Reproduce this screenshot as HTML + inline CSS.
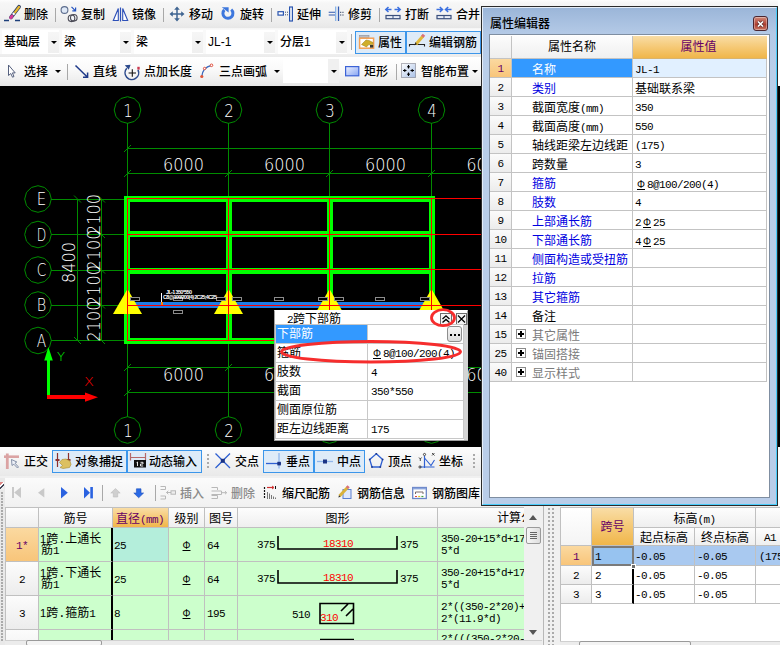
<!DOCTYPE html>
<html lang="zh-CN">
<head>
<meta charset="utf-8">
<title>属性编辑器</title>
<style>
*{box-sizing:border-box;margin:0;padding:0}
html,body{width:780px;height:645px;overflow:hidden;background:#f0f0f0}
body{position:relative;font-family:"Liberation Sans","Noto Sans CJK SC","WenQuanYi Zen Hei",sans-serif;font-size:12px;color:#000;line-height:1}
.abs,.t,.sep,.btn,.combo,.c,.ic{position:absolute}
.t{white-space:nowrap;height:14px;line-height:14px;font-size:12px;color:#000;font-weight:500}
.sep{width:1px;background:#a8a8a8}
.tb1{position:absolute;left:0;top:0;width:780px;height:28px;background:linear-gradient(#fdfdfd 0,#f6f6f6 3px,#f3f3f3 50%,#eaeaea 90%,#e6e6e6)}
.tb2{position:absolute;left:0;top:28px;width:780px;height:29px;background:linear-gradient(#f4f4f4 0,#f9f9f9 1.5px,#f9f9f9 25.5px,#eeeeee 26.5px,#ebebeb 29px)}
.tb3{position:absolute;left:0;top:57px;width:780px;height:29px;background:linear-gradient(#ffffff,#fafafa 40%,#f0f0f0 75%,#e6e6e6)}
.combo{top:30px;height:24px;background:#fff}
.combo .t{left:2px;top:5px;font-size:12px}
.combo .ar{position:absolute;right:0;top:2px;width:11px;height:21px;background:linear-gradient(#f6f6f6,#efefef)}
.combo .ar:after,.dar:after{content:"";position:absolute;left:3px;top:9px;border:3px solid transparent;border-top:3px solid #000;border-bottom:0}
.dar{position:absolute;width:8px;height:8px}
.dar:after{left:0;top:0}
.btn{border:1px solid #3c96ea;background:#deebf8}
svg{position:absolute;overflow:visible}

.cn{font-family:"Liberation Mono","Noto Sans CJK SC","WenQuanYi Zen Hei",monospace}
.m{font-family:"Liberation Mono",monospace;font-size:11px;letter-spacing:-0.6px}
.phi{font-family:"Liberation Sans",sans-serif;font-size:10px;letter-spacing:0;display:inline-block;width:12px;text-align:center;text-decoration:underline;text-decoration-thickness:1px;text-underline-offset:0.5px}
#dlg{position:absolute;left:481px;top:6px;width:297px;height:500px;border:1px solid #2b2b2b;background:linear-gradient(#9ab5d8,#b3c9e6 26px,#b9cee9 60px,#b9cde9)}
#dlg .in{position:absolute;left:0;top:0;right:0;bottom:0;border:1px solid #e6eef8;border-bottom-color:#49cdfb;border-right-color:#49cdfb}
#dlg .cl{position:absolute;left:7px;top:27px;width:281px;height:464px;padding-top:1px;background:#fff;border:1px solid #7f8ea1}
.pr{position:absolute;left:0;width:277px;height:19px;border-bottom:1px solid #c3c3c3}
.pr .n{position:absolute;left:0;top:0;width:22px;height:18px;background:linear-gradient(#fbfbfb,#ececec);border-right:1px solid #c3c3c3;text-align:center;line-height:21px;font-size:11px;letter-spacing:-0.6px;overflow:hidden}
.pr .k{position:absolute;left:22px;top:0;width:121px;height:18px;border-right:1px solid #c3c3c3;padding-left:20px;line-height:25px;overflow:hidden;white-space:nowrap}
.pr .v{position:absolute;left:143px;top:0;width:134px;height:18px;padding-left:2px;line-height:25px;overflow:hidden;white-space:nowrap;border-right:1px solid #c3c3c3}
.pr .v .m,.qr .v .m{position:relative;top:-1px}
.bl{color:#0000e0}
.gy{color:#7a7a7a}
.plus{position:absolute;left:4px;top:4px;width:10px;height:10px;border:1px solid #8a8a8a;background:#fff}
.plus:before{content:"";position:absolute;left:1px;top:3px;width:6px;height:2px;background:#000}
.plus:after{content:"";position:absolute;left:3px;top:1px;width:2px;height:6px;background:#000}
#pop{position:absolute;left:274px;top:310px;width:194px;height:131px;background:#fff;border:1px solid #a0a0a0;border-top-color:#fff}
.qr{position:absolute;left:0px;width:189px;height:19px;border-bottom:1px solid #c8c8c8;border-left:1px solid #c8c8c8}
.qr .k{position:absolute;left:0;top:0;width:92px;height:18px;border-right:1px solid #c8c8c8;padding-left:1px;line-height:21px;overflow:hidden;white-space:nowrap;font-size:12px}
.qr .v{position:absolute;left:92px;top:0;width:96px;height:18px;padding-left:3px;line-height:22px;white-space:nowrap;border-right:1px solid #c8c8c8}

.sn{position:absolute;left:0;top:447px;width:780px;height:29px;background:linear-gradient(#fdfdfd,#f3f3f3 50%,#e9e9e9)}
.rb{position:absolute;left:0;top:476px;width:780px;height:169px;background:#f0f0f0}
.gt{position:absolute;background:#fff;overflow:hidden}
.gt .c{border-right:1px solid #c0c0c0;border-bottom:1px solid #c0c0c0;white-space:nowrap;overflow:hidden;font-size:12px}
.hd{background:linear-gradient(#fdfdfd,#efefef);text-align:center;line-height:24px}
.g{background:#ccffcc}
.num{background:linear-gradient(#fcfcfc,#ececec);text-align:center}
.grip{position:absolute;width:3px;background-image:radial-gradient(circle at 1px 1px,#aaa 0.9px,transparent 1.1px);background-size:3px 4px}
</style>
</head>
<body>
<!-- ===== toolbar row 1 ===== -->
<div class="tb1">
 <div class="t" style="left:24px;top:8px">删除</div>
 <div class="sep" style="left:55px;top:8px;height:14px"></div>
 <div class="t" style="left:81px;top:8px">复制</div>
 <div class="t" style="left:132px;top:8px">镜像</div>
 <div class="sep" style="left:163px;top:8px;height:14px"></div>
 <div class="t" style="left:189px;top:8px">移动</div>
 <div class="t" style="left:240px;top:8px">旋转</div>
 <div class="sep" style="left:271px;top:8px;height:14px"></div>
 <div class="t" style="left:297px;top:8px">延伸</div>
 <div class="t" style="left:348px;top:8px">修剪</div>
 <div class="sep" style="left:379px;top:8px;height:14px"></div>
 <div class="t" style="left:405px;top:8px">打断</div>
 <div class="t" style="left:456px;top:8px">合并</div>
</div>
<!-- ===== toolbar row 2 ===== -->
<div class="tb2"></div>
<div class="combo" style="left:2px;width:57px"><div class="t">基础层</div><div class="ar"></div></div>
<div class="combo" style="left:62px;width:69px"><div class="t">梁</div><div class="ar"></div></div>
<div class="combo" style="left:134px;width:69px"><div class="t">梁</div><div class="ar"></div></div>
<div class="combo" style="left:206px;width:69px"><div class="t">JL-1</div><div class="ar"></div></div>
<div class="combo" style="left:278px;width:69px"><div class="t">分层1</div><div class="ar"></div></div>
<div class="sep" style="left:351px;top:34px;height:16px"></div>
<div class="btn" style="left:355px;top:31px;width:51px;height:23px"></div>
<div class="btn" style="left:406px;top:31px;width:75px;height:23px"></div>
<div class="t" style="left:378px;top:36px">属性</div>
<div class="t" style="left:429px;top:36px">编辑钢筋</div>
<!-- ===== toolbar row 3 ===== -->
<div class="tb3"></div>
<div class="t" style="left:24px;top:65px">选择</div>
<div class="dar" style="left:55px;top:70px"></div>
<div class="sep" style="left:67px;top:64px;height:16px"></div>
<div class="t" style="left:93px;top:65px">直线</div>
<div class="t" style="left:144px;top:65px">点加长度</div>
<div class="t" style="left:219px;top:65px">三点画弧</div>
<div class="dar" style="left:274px;top:70px"></div>
<div class="abs" style="left:283px;top:59px;width:45px;height:24px;background:#fff"></div>
<div class="abs" style="left:328px;top:59px;width:11px;height:24px;background:#f0f0f0"></div>
<div class="dar" style="left:331px;top:70px"></div>
<div class="t" style="left:364px;top:65px">矩形</div>
<div class="sep" style="left:396px;top:64px;height:16px"></div>
<div class="t" style="left:421px;top:65px">智能布置</div>
<div class="dar" style="left:472px;top:70px"></div>

<!-- ===== CANVAS ===== -->
<div id="canvas" class="abs" style="left:0;top:86px;width:482px;height:361px;background:#000"></div>
<svg id="cad" style="left:0;top:86px" width="482" height="361" viewBox="0 86 482 361" shape-rendering="crispEdges" font-family="'DejaVu Sans','Liberation Sans',sans-serif">
<g fill="none" stroke="#008c00" stroke-width="1">
<polygon points="127.5,123.3 120.9,121.5 116.0,116.7 114.2,110.0 116.0,103.4 120.9,98.5 127.5,96.7 134.1,98.5 139.0,103.3 140.8,110.0 139.0,116.7 134.2,121.5" shape-rendering="auto"/>
<polygon points="127.5,443.3 120.9,441.5 116.0,436.6 114.2,430.0 116.0,423.4 120.9,418.5 127.5,416.7 134.1,418.5 139.0,423.3 140.8,430.0 139.0,436.6 134.2,441.5" shape-rendering="auto"/>
<path d="M127.5 123V196M127.5 344V417"/>
<polygon points="228.5,123.3 221.8,121.5 217.0,116.7 215.2,110.0 217.0,103.4 221.8,98.5 228.5,96.7 235.1,98.5 240.0,103.3 241.8,110.0 240.0,116.7 235.2,121.5" shape-rendering="auto"/>
<polygon points="228.5,443.3 221.8,441.5 217.0,436.6 215.2,430.0 217.0,423.4 221.8,418.5 228.5,416.7 235.1,418.5 240.0,423.3 241.8,430.0 240.0,436.6 235.2,441.5" shape-rendering="auto"/>
<path d="M228.5 123V196M228.5 344V417"/>
<polygon points="329.5,123.3 322.9,121.5 318.0,116.7 316.2,110.0 318.0,103.4 322.9,98.5 329.5,96.7 336.1,98.5 341.0,103.3 342.8,110.0 341.0,116.7 336.2,121.5" shape-rendering="auto"/>
<polygon points="329.5,443.3 322.9,441.5 318.0,436.6 316.2,430.0 318.0,423.4 322.9,418.5 329.5,416.7 336.1,418.5 341.0,423.3 342.8,430.0 341.0,436.6 336.2,441.5" shape-rendering="auto"/>
<path d="M329.5 123V196M329.5 344V417"/>
<polygon points="431.5,123.3 424.9,121.5 420.0,116.7 418.2,110.0 420.0,103.4 424.9,98.5 431.5,96.7 438.1,98.5 443.0,103.3 444.8,110.0 443.0,116.7 438.2,121.5" shape-rendering="auto"/>
<polygon points="431.5,443.3 424.9,441.5 420.0,436.6 418.2,430.0 420.0,423.4 424.9,418.5 431.5,416.7 438.1,418.5 443.0,423.3 444.8,430.0 443.0,436.6 438.2,441.5" shape-rendering="auto"/>
<path d="M431.5 123V196M431.5 344V417"/>
<polygon points="38.0,212.3 31.4,210.5 26.5,205.7 24.7,199.0 26.5,192.3 31.4,187.5 38.0,185.7 44.6,187.5 49.5,192.3 51.3,199.0 49.5,205.7 44.7,210.5" shape-rendering="auto"/>
<path d="M51 199.0H124"/>
<polygon points="38.0,247.8 31.4,246.0 26.5,241.2 24.7,234.5 26.5,227.8 31.4,223.0 38.0,221.2 44.6,223.0 49.5,227.8 51.3,234.5 49.5,241.2 44.7,246.0" shape-rendering="auto"/>
<path d="M51 234.5H124"/>
<polygon points="38.0,283.3 31.4,281.5 26.5,276.6 24.7,270.0 26.5,263.4 31.4,258.5 38.0,256.7 44.6,258.5 49.5,263.3 51.3,270.0 49.5,276.6 44.7,281.5" shape-rendering="auto"/>
<path d="M51 270.0H124"/>
<polygon points="38.0,318.3 31.4,316.5 26.5,311.6 24.7,305.0 26.5,298.4 31.4,293.5 38.0,291.7 44.6,293.5 49.5,298.3 51.3,305.0 49.5,311.6 44.7,316.5" shape-rendering="auto"/>
<path d="M51 305.0H124"/>
<polygon points="38.0,353.8 31.4,352.0 26.5,347.1 24.7,340.5 26.5,333.9 31.4,329.0 38.0,327.2 44.6,329.0 49.5,333.8 51.3,340.5 49.5,347.1 44.7,352.0" shape-rendering="auto"/>
<path d="M51 340.5H124"/>
<path d="M127.5 148.5H482M127.5 173.5H482"/>
<path d="M127.5 367.5H482M127.5 392.5H482"/>
<path d="M77.5 199V341M101.5 199V341"/>
<path d="M124.0 152.0l7 -7M124.0 177.0l7 -7M124.0 371.0l7 -7M124.0 396.0l7 -7M225.0 177.0l7 -7M225.0 371.0l7 -7M326.0 177.0l7 -7M326.0 371.0l7 -7M428.0 177.0l7 -7M428.0 371.0l7 -7M74.0 195.5l7 7M98.0 195.5l7 7M98.0 231.0l7 7M98.0 266.5l7 7M98.0 301.5l7 7M74.0 337.0l7 7M98.0 337.0l7 7" shape-rendering="auto"/>
</g>
<g stroke="#00ff00" stroke-width="6" fill="none">
<path d="M127.3 196V344"/>
<path d="M229.0 196V344"/>
<path d="M330.0 196V344"/>
<path d="M431.5 196V344"/>
<path d="M124 199.0H434.5"/>
<path d="M124 234.0H434.5"/>
<path d="M124 271.0H434.5"/>
<path d="M124 340.8H434.5"/>
</g>
<path d="M131 305.2H432" stroke="#1f7ce6" stroke-width="6.4" fill="none"/>
<g stroke="#ff0000" stroke-width="1" fill="none">
<path d="M127.5 198V341"/>
<path d="M228.5 198V341"/>
<path d="M329.5 198V341"/>
<path d="M431.5 198V341"/>
<path d="M128 198.5H482"/>
<path d="M128 234.5H482"/>
<path d="M128 269.5H482"/>
<path d="M128 305.5H482"/>
<path d="M128 340.5H433"/>
</g>
<polygon points="127.5,289 113.0,314 142.0,314" fill="#ffff00" shape-rendering="auto"/>
<polygon points="228.5,289 214.0,314 243.0,314" fill="#ffff00" shape-rendering="auto"/>
<polygon points="329.5,289 315.0,314 344.0,314" fill="#ffff00" shape-rendering="auto"/>
<polygon points="431.5,289 417.0,314 446.0,314" fill="#ffff00" shape-rendering="auto"/>
<g stroke="#ff0000" stroke-width="1" fill="none">
<path d="M127.5 289V315"/>
<path d="M228.5 289V315"/>
<path d="M329.5 289V315"/>
<path d="M431.5 289V315"/>
<path d="M128 305.5H482"/>
</g>
<g stroke="#8c8c8c" stroke-width="1" fill="#000">
<rect x="130.5" y="297.5" width="9" height="3"/>
<rect x="173.5" y="297.5" width="9" height="3"/>
<rect x="173.5" y="310.5" width="9" height="3"/>
<rect x="216.5" y="297.5" width="9" height="3"/>
<rect x="232.5" y="297.5" width="9" height="3"/>
<rect x="274.5" y="297.5" width="9" height="3"/>
<rect x="318.5" y="297.5" width="9" height="3"/>
<rect x="334.5" y="297.5" width="9" height="3"/>
<rect x="375.5" y="297.5" width="9" height="3"/>
<rect x="420.5" y="297.5" width="9" height="3"/>
</g>
<path d="M161.5 293V302" stroke="#fff"/><rect x="161" y="302" width="2" height="3" fill="#ff8000"/>
<text x="166" y="294" font-size="5.5" font-weight="bold" fill="#fff" shape-rendering="auto" textLength="26" font-family="'Liberation Sans',sans-serif">JL-1 350*550</text>
<text x="163" y="299" font-size="5.5" font-weight="bold" fill="#fff" textLength="54" font-family="'Liberation Sans',sans-serif">C8@100/200(4) 2C25;4C25</text>
<g fill="#fff" font-size="18.5" font-weight="200" text-anchor="middle" shape-rendering="auto">
<text x="183.5" y="171.3" textLength="41" lengthAdjust="spacingAndGlyphs">6000</text>
<text x="183.5" y="381.3" textLength="41" lengthAdjust="spacingAndGlyphs">6000</text>
<text x="284.5" y="171.3" textLength="41" lengthAdjust="spacingAndGlyphs">6000</text>
<text x="284.5" y="381.3" textLength="41" lengthAdjust="spacingAndGlyphs">6000</text>
<text x="385.5" y="171.3" textLength="41" lengthAdjust="spacingAndGlyphs">6000</text>
<text x="385.5" y="381.3" textLength="41" lengthAdjust="spacingAndGlyphs">6000</text>
<text x="466.5" y="171.3" text-anchor="start" textLength="20" lengthAdjust="spacingAndGlyphs">60</text>
<text x="466.5" y="381.3" text-anchor="start" textLength="20" lengthAdjust="spacingAndGlyphs">60</text>
<text x="128.0" y="116.5" textLength="9.5" lengthAdjust="spacingAndGlyphs">1</text>
<text x="128.0" y="436.5" textLength="9.5" lengthAdjust="spacingAndGlyphs">1</text>
<text x="229.0" y="116.5" textLength="9.5" lengthAdjust="spacingAndGlyphs">2</text>
<text x="229.0" y="436.5" textLength="9.5" lengthAdjust="spacingAndGlyphs">2</text>
<text x="330.0" y="116.5" textLength="9.5" lengthAdjust="spacingAndGlyphs">3</text>
<text x="330.0" y="436.5" textLength="9.5" lengthAdjust="spacingAndGlyphs">3</text>
<text x="432.0" y="116.5" textLength="9.5" lengthAdjust="spacingAndGlyphs">4</text>
<text x="432.0" y="436.5" textLength="9.5" lengthAdjust="spacingAndGlyphs">4</text>
<text x="41.5" y="205.3" textLength="9.5" lengthAdjust="spacingAndGlyphs">E</text>
<text x="41.5" y="240.8" textLength="9.5" lengthAdjust="spacingAndGlyphs">D</text>
<text x="41.5" y="276.3" textLength="9.5" lengthAdjust="spacingAndGlyphs">C</text>
<text x="41.5" y="311.3" textLength="9.5" lengthAdjust="spacingAndGlyphs">B</text>
<text x="41.5" y="346.8" textLength="9.5" lengthAdjust="spacingAndGlyphs">A</text>
<text transform="translate(74.6 262.5) rotate(-90)" textLength="41" lengthAdjust="spacingAndGlyphs">8400</text>
<text transform="translate(100.2 214.5) rotate(-90)" textLength="41" lengthAdjust="spacingAndGlyphs">2100</text>
<text transform="translate(100.2 250.0) rotate(-90)" textLength="41" lengthAdjust="spacingAndGlyphs">2100</text>
<text transform="translate(100.2 285.5) rotate(-90)" textLength="41" lengthAdjust="spacingAndGlyphs">2100</text>
<text transform="translate(100.2 321.0) rotate(-90)" textLength="41" lengthAdjust="spacingAndGlyphs">2100</text>
</g>
<path d="M48.4 398V358" stroke="#00ff00" stroke-width="3.4" fill="none"/><polygon points="44.2,360.5 48.4,347 52.8,360.5" fill="#00ff00" shape-rendering="auto"/>
<path d="M46.7 397H86" stroke="#ff0000" stroke-width="4" fill="none"/><polygon points="85,392.6 98,397.2 85,401.8" fill="#ff0000" shape-rendering="auto"/>
<text x="57" y="360.5" font-size="13" fill="#00ff00" font-weight="200" shape-rendering="auto">Y</text>
<text x="84" y="386" font-size="13" fill="#ff0000" font-weight="200" shape-rendering="auto" textLength="10" lengthAdjust="spacingAndGlyphs">X</text>
</svg>
<!-- ===== ENDCANVAS ===== -->
<!-- ===== POPUP ===== -->
<div id="pop" class="cn">
<div class="t" style="left:12px;top:2px;font-weight:400"><span class="m">2</span>跨下部筋</div>
<div class="abs" style="left:165px;top:2px;width:12px;height:12px;border:1px solid #6e6e6e;background:#f4f4f4"><svg style="left:1px;top:1px" width="8" height="8" viewBox="0 0 8 8"><path d="M0.5 4L4 0.8L7.5 4M0.5 7.6L4 4.4L7.5 7.6" stroke="#000" stroke-width="1.3" fill="none"/></svg></div>
<div class="abs" style="left:181px;top:2px;width:11px;height:12px;border:1px solid #6e6e6e;background:#f4f4f4"><svg style="left:0;top:1px" width="9" height="8" viewBox="0 0 9 8"><path d="M1 0.5L8 7.5M8 0.5L1 7.5" stroke="#000" stroke-width="1.2" fill="none"/></svg></div>
<div class="qr" style="top:14px"><div class="k" style="background:#3399ff;color:#fff">下部筋</div><div class="v"><span class="m"></span><div class="abs" style="left:79px;top:1px;width:15px;height:16px;border:1px solid #8e8e8e;border-radius:3px;background:linear-gradient(#f6f6f6,#dcdcdc)"><div class="abs" style="left:2px;top:7px;width:2px;height:2px;background:#000;box-shadow:4px 0 #000,8px 0 #000"></div></div></div></div>
<div class="qr" style="top:33px"><div class="k">箍筋</div><div class="v"><span class="m"><span class="phi">Φ</span>8@100/200(4)</span></div></div>
<div class="qr" style="top:52px"><div class="k">肢数</div><div class="v"><span class="m">4</span></div></div>
<div class="qr" style="top:71px"><div class="k">截面</div><div class="v"><span class="m">350*550</span></div></div>
<div class="qr" style="top:90px"><div class="k">侧面原位筋</div><div class="v"><span class="m"></span></div></div>
<div class="qr" style="top:109px"><div class="k">距左边线距离</div><div class="v"><span class="m">175</span></div></div>
<div class="abs" style="left:189px;top:14px;width:4px;height:115px;background:#d4d4d4"></div><div class="abs" style="left:0;top:13px;width:189px;height:1px;background:#c8c8c8"></div>
</div>
<svg style="left:0;top:0" width="780" height="645"><ellipse cx="371" cy="351.8" rx="89.5" ry="10.3" fill="none" stroke="#f62d2d" stroke-width="3"/><ellipse cx="443" cy="317.7" rx="11.5" ry="8" fill="none" stroke="#f62d2d" stroke-width="2.8"/></svg>
<!-- ===== BOTTOM ===== -->
<div class="sn"></div>
<div class="t" style="left:24px;top:455px">正交</div>
<div class="btn" style="left:52px;top:450px;width:75px;height:23px"></div>
<div class="btn" style="left:127px;top:450px;width:75px;height:23px"></div>
<div class="t" style="left:75px;top:455px">对象捕捉</div>
<div class="t" style="left:149px;top:455px">动态输入</div>
<div class="grip" style="left:207px;top:454px;height:16px"></div>
<div class="t" style="left:235px;top:455px">交点</div>
<div class="btn" style="left:263px;top:450px;width:51px;height:23px"></div>
<div class="btn" style="left:314px;top:450px;width:51px;height:23px"></div>
<div class="t" style="left:286px;top:455px">垂点</div>
<div class="t" style="left:337px;top:455px">中点</div>
<div class="t" style="left:388px;top:455px">顶点</div>
<div class="t" style="left:439px;top:455px">坐标</div>
<div class="grip" style="left:473px;top:454px;height:16px"></div>
<div class="rb"></div>
<div class="abs" style="left:0;top:478px;width:545px;height:28px;background:linear-gradient(#fbfbfb,#f1f1f1)"></div>
<div class="abs" style="left:0;top:478px;width:5px;height:167px;background:#e9e9e9"></div><div class="grip" style="left:1px;top:492px;height:150px;background-size:3px 3px"></div><div class="abs" style="left:0;top:482px;width:4px;height:8px;background:linear-gradient(135deg,#e08a8a 30%,#fff 30%,#fff 45%,#445 45%,#445 60%,#eee 60%)"></div>
<div class="sep" style="left:102px;top:485px;height:16px"></div>
<div class="sep" style="left:155px;top:485px;height:16px"></div>
<div class="t" style="left:180px;top:487px;color:#8b8b8b">插入</div>
<div class="t" style="left:231px;top:487px;color:#8b8b8b">删除</div>
<div class="t" style="left:282px;top:487px">缩尺配筋</div>
<div class="t" style="left:357px;top:487px">钢筋信息</div>
<div class="t" style="left:432px;top:487px">钢筋图库</div>
<div class="gt cn" style="left:5px;top:507px;width:519px;height:133px;border-left:1px solid #c0c0c0;border-top:1px solid #c0c0c0">
<div class="c hd" style="left:0px;top:0;width:33px;height:20px"></div>
<div class="c hd" style="left:33px;top:0;width:74px;height:20px">筋号</div>
<div class="c hd" style="left:107px;top:0;width:56px;height:20px;background:linear-gradient(#f9dda6,#f5c976 50%,#f0b64a);color:#660066;text-align:left;padding-left:3px">直径<span class="m">(mm)</span></div>
<div class="c hd" style="left:163px;top:0;width:36px;height:20px">级别</div>
<div class="c hd" style="left:199px;top:0;width:33px;height:20px">图号</div>
<div class="c hd" style="left:232px;top:0;width:200px;height:20px">图形</div>
<div class="c hd" style="left:432px;top:0;width:93px;height:20px"></div>
<div class="t" style="left:491px;top:4px;font-weight:400">计算公式</div>
<div class="c num" style="left:0;top:20px;width:33px;height:34px;line-height:36px;background:linear-gradient(#fbd9a0,#f8c57a);color:#660066"><span class="m">1*</span></div>
<div class="c g" style="left:33px;top:20px;width:74px;height:34px;padding:6px 0 0 2px;line-height:11px;border-right:2px solid #000"><span class="m" style="letter-spacing:0;margin-left:-1px;font-family:'Liberation Sans',sans-serif">1</span>跨.上通长<br>筋<span class="m">1</span></div>
<div class="c g" style="left:107px;top:20px;width:56px;height:34px;padding-left:1px;line-height:36px;background:#b4eedb"><span class="m">25</span></div>
<div class="c g" style="left:163px;top:20px;width:36px;height:34px;line-height:36px;text-align:center"><span class="m"><span class="phi">Φ</span></span></div>
<div class="c g" style="left:199px;top:20px;width:33px;height:34px;padding-left:2px;line-height:36px"><span class="m">64</span></div>
<div class="c g" style="left:232px;top:20px;width:200px;height:34px"></div>
<div class="c g" style="left:432px;top:20px;width:93px;height:34px;padding:5px 0 0 3px;line-height:12px"><span class="m">350-20+15*d+17<br>5*d</span></div>
<div class="c num" style="left:0;top:54px;width:33px;height:34px;line-height:36px"><span class="m">2</span></div>
<div class="c g" style="left:33px;top:54px;width:74px;height:34px;padding:6px 0 0 2px;line-height:11px;border-right:2px solid #000"><span class="m" style="letter-spacing:0;margin-left:-1px;font-family:'Liberation Sans',sans-serif">1</span>跨.下通长<br>筋<span class="m">1</span></div>
<div class="c g" style="left:107px;top:54px;width:56px;height:34px;padding-left:1px;line-height:36px"><span class="m">25</span></div>
<div class="c g" style="left:163px;top:54px;width:36px;height:34px;line-height:36px;text-align:center"><span class="m"><span class="phi">Φ</span></span></div>
<div class="c g" style="left:199px;top:54px;width:33px;height:34px;padding-left:2px;line-height:36px"><span class="m">64</span></div>
<div class="c g" style="left:232px;top:54px;width:200px;height:34px"></div>
<div class="c g" style="left:432px;top:54px;width:93px;height:34px;padding:5px 0 0 3px;line-height:12px"><span class="m">350-20+15*d+17<br>5*d</span></div>
<div class="c num" style="left:0;top:88px;width:33px;height:34px;line-height:36px"><span class="m">3</span></div>
<div class="c g" style="left:33px;top:88px;width:74px;height:34px;padding:12px 0 0 2px;line-height:11px;border-right:2px solid #000"><span class="m" style="letter-spacing:0;margin-left:-1px;font-family:'Liberation Sans',sans-serif">1</span>跨.箍筋<span class="m">1</span></div>
<div class="c g" style="left:107px;top:88px;width:56px;height:34px;padding-left:1px;line-height:36px"><span class="m">8</span></div>
<div class="c g" style="left:163px;top:88px;width:36px;height:34px;line-height:36px;text-align:center"><span class="m"><span class="phi">Φ</span></span></div>
<div class="c g" style="left:199px;top:88px;width:33px;height:34px;padding-left:2px;line-height:36px"><span class="m">195</span></div>
<div class="c g" style="left:232px;top:88px;width:200px;height:34px"></div>
<div class="c g" style="left:432px;top:88px;width:93px;height:34px;padding:5px 0 0 3px;line-height:12px"><span class="m">2*((350-2*20)+<br>2*(11.9*d)</span></div>
<div class="c num" style="left:0;top:122px;width:33px;height:34px;line-height:36px"><span class="m">4</span></div>
<div class="c g" style="left:33px;top:122px;width:74px;height:34px;padding:12px 0 0 2px;line-height:11px;border-right:2px solid #000"></div>
<div class="c g" style="left:107px;top:122px;width:56px;height:34px;padding-left:1px;line-height:36px"><span class="m"></span></div>
<div class="c g" style="left:163px;top:122px;width:36px;height:34px;line-height:36px;text-align:center"><span class="m"></span></div>
<div class="c g" style="left:199px;top:122px;width:33px;height:34px;padding-left:2px;line-height:36px"><span class="m"></span></div>
<div class="c g" style="left:232px;top:122px;width:200px;height:34px"></div>
<div class="c g" style="left:432px;top:122px;width:93px;height:34px;padding:5px 0 0 3px;line-height:12px"><span class="m"><span style="position:relative;top:-2px">2*(((350-2*20-</span></span></div>
</div>
<svg style="left:0;top:0" width="780" height="645" font-family="'Liberation Mono',monospace" font-size="11" letter-spacing="-0.6">
<path d="M278 536V549H397V536" stroke="#000" stroke-width="1.6" fill="none"/>
<text x="257" y="548">375</text><text x="400" y="548">375</text><text x="323" y="547" fill="#ff0000">18310</text>
<path d="M278 570V583H397V570" stroke="#000" stroke-width="1.6" fill="none"/>
<text x="257" y="582">375</text><text x="400" y="582">375</text><text x="323" y="581" fill="#ff0000">18310</text>
<path d="M320 603.5H353.5V623.5H320Z M341 611L348 604 M346 616L353 609" stroke="#000" stroke-width="1.6" fill="none"/>
<text x="292" y="618">510</text><text x="320" y="621" fill="#ff0000">310</text>
<path d="M320 639.5H354" stroke="#000" stroke-width="1.6"/>
</svg>
<div class="abs" style="left:525px;top:507px;width:17px;height:133px;background:#f0f0f0"></div>
<div class="abs" style="left:529px;top:515px;border:4px solid transparent;border-bottom:5px solid #555;border-top:0"></div>
<div class="abs" style="left:529px;top:630px;border:4px solid transparent;border-top:5px solid #555;border-bottom:0"></div>
<div class="abs" style="left:526px;top:527px;width:15px;height:17px;border:1px solid #9a9a9a;border-radius:2px;background:linear-gradient(90deg,#f6f6f6,#dedede)"><div class="abs" style="left:3px;top:4px;width:7px;height:1px;background:#666;box-shadow:0 2px #666,0 4px #666,0 6px #666"></div></div>
<div class="abs" style="left:5px;top:640px;width:537px;height:5px;background:#ececec;border-top:1px solid #d0d0d0"></div>
<div class="abs" style="left:26px;top:640px;width:76px;height:6px;border:1px solid #9a9a9a;border-radius:2px;background:#f4f4f4"></div>
<div class="abs" style="left:543px;top:478px;width:1px;height:167px;background:#b8b8b8"></div>
<div class="grip" style="left:548px;top:508px;height:137px;width:8px;background-size:4px 4px"></div>
<div class="gt cn" style="left:560px;top:507px;width:220px;height:135px;border-left:1px solid #c0c0c0;border-top:1px solid #c0c0c0">
<div class="c hd" style="left:0;top:0;width:31px;height:38px;background:linear-gradient(#fff,#f4f4f4)"></div>
<div class="c hd" style="left:31px;top:0;width:42px;height:38px;background:linear-gradient(#f9dda6,#f5c976 50%,#f0b64a);color:#660066;line-height:40px">跨号</div>
<div class="c hd" style="left:73px;top:0;width:122px;height:20px">标高<span class="m">(m)</span></div>
<div class="c hd" style="left:195px;top:0;width:30px;height:20px"></div>
<div class="c hd" style="left:73px;top:20px;width:61px;height:18px;line-height:22px">起点标高</div>
<div class="c hd" style="left:134px;top:20px;width:61px;height:18px;line-height:22px">终点标高</div>
<div class="c hd" style="left:195px;top:20px;width:30px;height:18px;line-height:21px;text-align:left;padding-left:8px"><span class="m">A1</span></div>
<div class="c num" style="left:0;top:38px;width:31px;height:20px;line-height:22px;background:linear-gradient(#fbd9a0,#f8c57a);color:#660066"><span class="m">1</span></div>
<div class="c" style="left:31px;top:38px;width:42px;height:20px;line-height:21px;padding-left:3px;background:#97c3f0;border:2px solid #7a7a7a;line-height:18px;padding-left:1px"><span class="m">1</span></div>
<div class="c" style="left:73px;top:38px;width:61px;height:20px;line-height:22px;padding-left:1px;background:#a9c9f0"><span class="m">-0.05</span></div>
<div class="c" style="left:134px;top:38px;width:61px;height:20px;line-height:22px;padding-left:2px;background:#a9c9f0"><span class="m">-0.05</span></div>
<div class="c" style="left:195px;top:38px;width:30px;height:20px;line-height:22px;padding-left:3px;background:#a9c9f0"><span class="m">(175)</span></div>
<div class="c num" style="left:0;top:58px;width:31px;height:19px;line-height:21px"><span class="m">2</span></div>
<div class="c" style="left:31px;top:58px;width:42px;height:19px;line-height:21px;padding-left:3px;border-right:2px solid #000"><span class="m">2</span></div>
<div class="c" style="left:73px;top:58px;width:61px;height:19px;line-height:21px;padding-left:1px"><span class="m">-0.05</span></div>
<div class="c" style="left:134px;top:58px;width:61px;height:19px;line-height:21px;padding-left:2px"><span class="m">-0.05</span></div>
<div class="c" style="left:195px;top:58px;width:30px;height:19px;line-height:21px;padding-left:3px"><span class="m"></span></div>
<div class="c num" style="left:0;top:77px;width:31px;height:19px;line-height:21px"><span class="m">3</span></div>
<div class="c" style="left:31px;top:77px;width:42px;height:19px;line-height:21px;padding-left:3px;border-right:2px solid #000"><span class="m">3</span></div>
<div class="c" style="left:73px;top:77px;width:61px;height:19px;line-height:21px;padding-left:1px"><span class="m">-0.05</span></div>
<div class="c" style="left:134px;top:77px;width:61px;height:19px;line-height:21px;padding-left:2px"><span class="m">-0.05</span></div>
<div class="c" style="left:195px;top:77px;width:30px;height:19px;line-height:21px;padding-left:3px"><span class="m"></span></div>
<div class="abs" style="left:70px;top:56px;width:5px;height:5px;background:#6e6e6e;border:1px solid #fff"></div>
</div>
<div class="abs" style="left:560px;top:641px;width:220px;height:4px;background:#ececec;border-top:1px solid #d0d0d0"></div>
<div class="abs" style="left:579px;top:641px;width:112px;height:6px;border:1px solid #9a9a9a;border-radius:2px;background:#f4f4f4"></div>
<!-- ===== ENDBOTTOM ===== -->
<svg id="icons" style="left:0;top:0" width="482" height="645" viewBox="0 0 482 645" fill="none">
<path d="M4 20.5H9M15 20.5H20" stroke="#1d3f7a" stroke-width="1.6"/>
<path d="M11 17.3L19 6.8" stroke="#2d3f66" stroke-width="3.8" stroke-linecap="round"/>
<path d="M15 12.3L19 7" stroke="#e8b830" stroke-width="2.2" stroke-linecap="round"/>
<path d="M13 14.8L14.3 13.1" stroke="#fff" stroke-width="2.4"/>
<path d="M10.8 17.7L12 16.1" stroke="#d63a9a" stroke-width="3" stroke-linecap="round"/>
<circle cx="64.5" cy="10" r="3.4" stroke="#5d6d8d" stroke-width="1.1" fill="#dfe9f7"/>
<circle cx="71.5" cy="18.3" r="3.3" stroke="#4a4a55" stroke-width="1.1" fill="#f2f4f8"/><circle cx="73.8" cy="17.8" r="3.3" stroke="#4a4a55" stroke-width="1.1"/>
<path d="M71.5 6.8L75.3 10.6M75.6 7.6V10.9H72.3" stroke="#2453c0" stroke-width="1.2"/>
<path d="M118.3 8.5V20.5H113.3Z M122.7 8.5V20.5H127.7Z" stroke="#2d50b8" stroke-width="1.1" fill="#fff"/><path d="M120.5 7.5V21.5" stroke="#2d50b8" stroke-width="1.2"/>
<path d="M171 14H183M177 8V20" stroke="#3f6491" stroke-width="1.5"/><path d="M177 6.5L179.8 9.8H174.2ZM177 21.5L179.8 18.2H174.2ZM169.5 14L172.8 11.2V16.8ZM184.5 14L181.2 11.2V16.8Z" fill="#3f6491"/>
<path d="M231.2 9.6A5 5 0 1 1 224.3 9.9" stroke="#3d77dd" stroke-width="3"/><path d="M221.8 7.2H228.6V12.4Z" fill="#3d77dd"/>
<rect x="278" y="11.7" width="5.4" height="3.4" stroke="#2a55b0" stroke-width="1.2" fill="#fff"/><path d="M285 12.2H288M285 14.8H288" stroke="#3a4a6a" stroke-width="1" stroke-dasharray="1 1"/><rect x="289.6" y="7" width="2.8" height="14" stroke="#2a55b0" stroke-width="1.2" fill="#fff"/>
<path d="M328.7 12.3H335M328.7 15H335" stroke="#2f58b0" stroke-width="1.1"/><path d="M335.7 6.5V21" stroke="#7fb0e8" stroke-width="1.2"/><path d="M338.5 6.5V21" stroke="#2f58b0" stroke-width="1.3"/><path d="M340 12.3H344M340 15H344" stroke="#3a4a6a" stroke-width="1" stroke-dasharray="1.3 1"/>
<rect x="386.0" y="15.5" width="14" height="3.2" stroke="#3a4f7d" stroke-width="1.2" fill="#e9eef8"/><path d="M393.0 15.5V18.7" stroke="#3a4f7d" stroke-width="1"/>
<path d="M386.0 9.5H391.5M388.5 7L385.8 9.5L388.5 12" stroke="#3a6fe0" stroke-width="1.5"/>
<path d="M394.5 9.5H400.0M397.5 7L400.2 9.5L397.5 12" stroke="#3a6fe0" stroke-width="1.5"/>
<rect x="437.0" y="15.5" width="14" height="3.2" stroke="#3a4f7d" stroke-width="1.2" fill="#e9eef8"/><path d="M444.0 15.5V18.7" stroke="#3a4f7d" stroke-width="1"/>
<path d="M436.5 9.5H442.0M439.8 7L442.5 9.5L439.8 12" stroke="#3a6fe0" stroke-width="1.5"/>
<path d="M446.0 9.5H451.5M448.2 7L445.5 9.5L448.2 12" stroke="#3a6fe0" stroke-width="1.5"/>
<rect x="359.5" y="35.3" width="9.5" height="2" fill="#b9bcc4" stroke="#8e929c" stroke-width="0.6"/><rect x="359.6" y="38.2" width="14" height="10" stroke="#f3a055" stroke-width="1.5" fill="#fff"/><path d="M361.5 44.5L366 40L369 40.5L373 42.5L372.8 44.5L368.5 44.8L366.5 47Z" fill="#cfae2a" stroke="#9a7d18" stroke-width="0.5"/><rect x="370" y="45" width="3.2" height="2.6" fill="#3a3a30"/>
<path d="M409.5 46.5V44.5H424.5V46.5" stroke="#222" stroke-width="1.1"/><path d="M416 44.2L423 36" stroke="#e0b83a" stroke-width="3"/><path d="M422.3 36.8L424 34.8" stroke="#d9707a" stroke-width="3.2"/><path d="M414.6 45.6L416.8 43.2L415.2 42.2Z" fill="#333"/>
<path d="M8.5 65V75.5L10.8 73.5L12.5 77.2L14 76.5L12.4 72.9H15.2Z" stroke="#55607e" stroke-width="1" fill="#fff"/>
<path d="M75.5 65.5L87.3 77M83 77.2H87.6V72.5" stroke="#1f3a8a" stroke-width="1.5"/>
<path d="M126.8 68.2A6.8 6.8 0 1 0 138 69.8" stroke="#2c4a8c" stroke-width="1.6"/><path d="M124.8 65.2L130.6 64.8L128.8 69.8Z" fill="#2c4a8c"/><path d="M128.6 73H136M132.3 69.3V76.7" stroke="#111" stroke-width="1.1"/><rect x="137.3" y="66.8" width="2.4" height="2.8" fill="#cc3a50"/>
<path d="M201.8 76.5Q202.5 67.5 211.5 65.3" stroke="#3a6abf" stroke-width="1.3"/><circle cx="201.8" cy="76.5" r="1.6" fill="#e0573a"/><circle cx="204.6" cy="68.5" r="1.2" stroke="#e0402a" stroke-width="0.9" fill="#fff"/><circle cx="211.5" cy="65.3" r="1.3" stroke="#e0402a" stroke-width="0.9" fill="#fff"/>
<defs><linearGradient id="rg" x1="0" y1="0" x2="1" y2="1"><stop offset="0" stop-color="#eef2ff"/><stop offset="1" stop-color="#86a4f2"/></linearGradient><linearGradient id="sg" x1="0" y1="0" x2="1" y2="1"><stop offset="0" stop-color="#ffffff"/><stop offset="1" stop-color="#a9c0e6"/></linearGradient></defs>
<rect x="345.6" y="66.6" width="13.2" height="9.2" stroke="#3b62d6" stroke-width="1.2" fill="url(#rg)"/>
<rect x="401.5" y="63.5" width="14" height="14" stroke="#6b6b78" stroke-width="1" stroke-dasharray="1 1" fill="url(#sg)"/><path d="M408.5 65V68.5M408.5 72.5V76M403 70.5H406.5M410.5 70.5H414" stroke="#000" stroke-width="1.1"/><path d="M407 66.8H410M407 74.2H410M404.8 69V72M412.2 69V72" stroke="#000" stroke-width="1"/>
<path d="M7.3 453.5V469" stroke="#dba3a3" stroke-width="2.8"/><path d="M4 456.7H19" stroke="#dba3a3" stroke-width="2.6"/><path d="M11.5 459.5L12 465.5L13.8 464.2L17.5 468L18.5 467L15 463.2L16.8 462Z" fill="#eef1f8" stroke="#6c7a96" stroke-width="0.8"/>
<path d="M57.5 453V467M68.5 453V467" stroke="#8c3030" stroke-width="1.2"/><path d="M55.5 460H59.5M66.5 460H70.5" stroke="#8c3030" stroke-width="2"/><path d="M59.5 462.5L62 459.5L66 459L70 461L71 464.5L69.5 467.5L63 468.5L60 467.5L62.5 465.5Z" fill="#dcc060" stroke="#a88c30" stroke-width="0.6"/>
<path d="M130.5 453V460.5M145.5 453V460.5M130.5 457.5H145.5" stroke="#b56a6a" stroke-width="1.2"/><rect x="134" y="460" width="12" height="7.5" fill="#111"/><path d="M137.5 462V466M136.6 462.6L137.5 462M140.5 462.3H143V464H140.5V466H143.2" stroke="#fff" stroke-width="0.9"/>
<path d="M215.5 453.5L230 468M230 453.5L215.5 468" stroke="#2f60d2" stroke-width="1.3"/><rect x="220.8" y="458.8" width="4" height="4" fill="#1b3486"/>
<path d="M279 453V468.5" stroke="#8fb5ea" stroke-width="1.3"/><path d="M266 463.5H281" stroke="#2f60d2" stroke-width="1.3"/><rect x="277.3" y="461.8" width="3.6" height="3.6" fill="#1b3486"/>
<path d="M317 461.5H333" stroke="#8fb5ea" stroke-width="1.3"/><rect x="323" y="459.5" width="4" height="4" fill="#1b3486"/>
<path d="M376.3 453.8L382.6 459.5L380.3 467H372L369.7 459.5Z" stroke="#2f60d2" stroke-width="1.3"/><path d="M375.5 453H377.1V454.6H375.5ZM381.8 458.7H383.4V460.3H381.8ZM379.5 466.2H381.1V467.8H379.5ZM371.2 466.2H372.8V467.8H371.2ZM368.9 458.7H370.5V460.3H368.9Z" fill="#1b3486"/>
<path d="M424.5 456V468M420 467H434.5" stroke="#2f60d2" stroke-width="1.2"/><path d="M424.5 458L431 465.5L434.5 460" stroke="#2f60d2" stroke-width="1.1"/><circle cx="424.5" cy="454.5" r="1.1" stroke="#222" stroke-width="0.8"/><circle cx="420" cy="467" r="1.1" stroke="#222" stroke-width="0.8"/><path d="M432 453L434.5 455.5M434.5 453L432 455.5M419 457.5L420.3 459L421.6 457.5M420.3 459V461" stroke="#222" stroke-width="0.8"/>
<path d="M13 487V498" stroke="#c9c9c9" stroke-width="2"/><path d="M21 487V498L14.2 492.5Z" fill="#c9c9c9"/><path d="M44.3 488V497.4L38 492.7Z" fill="#c9c9c9"/>
<path d="M61 487V498.4L67.8 492.7Z" fill="#2a62e0"/><path d="M84 487V498.4L90 492.7Z" fill="#2a62e0"/><path d="M91.6 487V498.4" stroke="#2a62e0" stroke-width="2.6"/>
<path d="M115.5 488.5L120.2 493H117.7V497H113.3V493H110.8Z" fill="#cfcfcf" stroke="#bdbdbd" stroke-width="0.6"/>
<path d="M138.7 497.8L143.6 493H141V488.8H136.4V493H133.8Z" fill="#2a6ae6" stroke="#1f4fb8" stroke-width="0.6"/>
<path d="M160.5 486.5H165.5V489.5H160.5M160.5 496H165.5V499H160.5" stroke="#b8b8b8" stroke-width="1"/><path d="M166.5 492.5H171" stroke="#b8b8b8" stroke-width="1"/><path d="M168.3 490.8L166.5 492.5L168.3 494.2" stroke="#b8b8b8" stroke-width="1"/><rect x="171" y="490.8" width="4.5" height="3.4" stroke="#b8b8b8" stroke-width="1" fill="#eee"/>
<path d="M211.5 487.5H217.5V490M211.5 491H221.5V494.5H211.5M211.5 495.5H217.5V498.5H211.5" stroke="#b8b8b8" stroke-width="1"/><path d="M222 492.7H226.5M225 491.2L226.7 492.7L225 494.2" stroke="#b8b8b8" stroke-width="1"/>
<path d="M264.5 487V499" stroke="#111" stroke-width="1.2" stroke-dasharray="2 1"/><path d="M267 487.5H273.5" stroke="#d03030" stroke-width="1.2"/><path d="M272 486L274 487.5L272 489" stroke="#d03030" stroke-width="1"/><path d="M275.5 486V489" stroke="#111" stroke-width="1"/><path d="M267.5 492V499M269.5 493.5V499M271.5 495V499M273.5 496.5V499M275.5 497.5V499" stroke="#777" stroke-width="1"/>
<rect x="343" y="489.5" width="8" height="9" fill="#dfe8fb" stroke="#5a7fd0" stroke-width="1"/><path d="M339.5 496L347.5 487.5" stroke="#d9b23a" stroke-width="3"/><path d="M347 488L348.6 486.3" stroke="#d9707a" stroke-width="3"/><path d="M338.4 497.5L340.6 496.8L339 495.2Z" fill="#333"/>
<rect x="412.7" y="487.5" width="13.6" height="11" fill="#fff" stroke="#6a86c8" stroke-width="1.3"/><path d="M413 488.6H426" stroke="#8aa4dc" stroke-width="1.6"/><path d="M415.5 494V492H423V494" stroke="#7a6a6a" stroke-width="1"/><path d="M415 496.5H417" stroke="#e04040" stroke-width="1.2"/><path d="M418.2 496.5H420.2" stroke="#e0c020" stroke-width="1.2"/><path d="M421.4 496.5H423.4" stroke="#40a040" stroke-width="1.2"/>
</svg>
<!-- ===== DIALOG ===== -->
<div class="abs" style="left:778px;top:0;width:2px;height:506px;background:linear-gradient(#fff 0,#fff 86px,#000 86px,#000 447px,#fff 447px)"></div>
<div id="dlg"><div class="in"></div>
<div class="t" style="left:8px;top:10px;font-size:12px">属性编辑器</div>
<div class="abs" style="left:271px;top:9px;width:15px;height:15px;border:1px solid #4b2630;border-radius:3px;background:linear-gradient(#d08b7c,#b4483a 50%,#a83a2c 55%,#c87462);box-shadow:inset 0 0 0 1px rgba(255,255,255,.35)"><svg style="left:3px;top:3.5px" width="7" height="6" viewBox="0 0 7 6"><path d="M1 0.5L6 5.5M6 0.5L1 5.5" stroke="#5a2a2a" stroke-width="3" fill="none"/><path d="M1 0.5L6 5.5M6 0.5L1 5.5" stroke="#fff" stroke-width="1.7" fill="none"/></svg></div>
<div class="cl cn">
<div class="abs" style="left:0;top:1px;width:22px;height:23px;background:linear-gradient(#fcfcfc,#eee);border-right:1px solid #c3c3c3;border-bottom:1px solid #c3c3c3"></div>
<div class="abs" style="left:22px;top:1px;width:121px;height:23px;background:linear-gradient(#fdfdfd,#f0f0f0);border-right:1px solid #c3c3c3;border-bottom:1px solid #c3c3c3;text-align:center;line-height:25px;padding-left:0;overflow:hidden">属性名称</div>
<div class="abs" style="left:143px;top:1px;width:134px;height:23px;background:linear-gradient(#f9dda6,#f5c976 50%,#f0b64a);border-bottom:1px solid #d9b36c;text-align:center;line-height:25px;color:#660066;padding-right:3px;overflow:hidden">属性值</div>
<div class="pr" style="top:24px"><div class="n" style="background:linear-gradient(#fbd9a0,#f8c57a);color:#660066">1</div><div class="k" style="background:#3399ff;color:#fff">名称</div><div class="v" style="background:#e1f0ff"><span class="m">JL-1</span></div></div>
<div class="pr" style="top:43px"><div class="n">2</div><div class="k bl">类别</div><div class="v">基础联系梁</div></div>
<div class="pr" style="top:62px"><div class="n">3</div><div class="k ">截面宽度<span class="m">(mm)</span></div><div class="v"><span class="m">350</span></div></div>
<div class="pr" style="top:81px"><div class="n">4</div><div class="k ">截面高度<span class="m">(mm)</span></div><div class="v"><span class="m">550</span></div></div>
<div class="pr" style="top:100px"><div class="n">5</div><div class="k ">轴线距梁左边线距</div><div class="v"><span class="m">(175)</span></div></div>
<div class="pr" style="top:119px"><div class="n">6</div><div class="k ">跨数量</div><div class="v"><span class="m">3</span></div></div>
<div class="pr" style="top:138px"><div class="n">7</div><div class="k bl">箍筋</div><div class="v"><span class="m"><span class="phi">Φ</span>8@100/200(4)</span></div></div>
<div class="pr" style="top:157px"><div class="n">8</div><div class="k bl">肢数</div><div class="v"><span class="m">4</span></div></div>
<div class="pr" style="top:176px"><div class="n">9</div><div class="k bl">上部通长筋</div><div class="v"><span class="m">2<span class="phi">Φ</span>25</span></div></div>
<div class="pr" style="top:195px"><div class="n">10</div><div class="k bl">下部通长筋</div><div class="v"><span class="m">4<span class="phi">Φ</span>25</span></div></div>
<div class="pr" style="top:214px"><div class="n">11</div><div class="k bl">侧面构造或受扭筋</div><div class="v"></div></div>
<div class="pr" style="top:233px"><div class="n">12</div><div class="k bl">拉筋</div><div class="v"></div></div>
<div class="pr" style="top:252px"><div class="n">13</div><div class="k bl">其它箍筋</div><div class="v"></div></div>
<div class="pr" style="top:271px"><div class="n">14</div><div class="k ">备注</div><div class="v"></div></div>
<div class="pr" style="top:290px"><div class="n">15</div><div class="k gy"><div class="plus"></div>其它属性</div><div class="v"></div></div>
<div class="pr" style="top:309px"><div class="n">25</div><div class="k gy"><div class="plus"></div>锚固搭接</div><div class="v"></div></div>
<div class="pr" style="top:328px"><div class="n">40</div><div class="k gy"><div class="plus"></div>显示样式</div><div class="v"></div></div>
</div></div>

</body>
</html>
